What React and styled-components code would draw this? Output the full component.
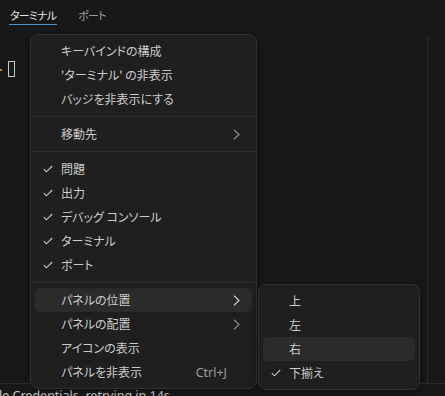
import React from "react";
import styled, { createGlobalStyle } from "styled-components";

const Global = createGlobalStyle`
  html, body { margin: 0; padding: 0; background: #181818; overflow: hidden; }
  * { box-sizing: border-box; }
`;

const jp = `"Noto Sans CJK JP", "Noto Sans", "Liberation Sans", sans-serif`;

const Page = styled.div`
  position: relative;
  width: 445px;
  height: 396px;
  overflow: hidden;
  background: #181818;
  display: flex;
  flex-direction: column;
  font-family: ${jp};
  font-feature-settings: "palt";
`;

const TabBar = styled.div`
  flex: 0 0 35px;
  display: flex;
  align-items: flex-start;
  gap: 20px;
  padding-left: 9px;
`;

const Tab = styled.div`
  padding: 7px 1px 1px;
  line-height: 16px;
  font-size: 11px;
  letter-spacing: -0.8px;
  color: ${(p) => (p.$active ? "#e7e7e7" : "#9d9d9d")};
  border-bottom: 1px solid ${(p) => (p.$active ? "#4f94c8" : "transparent")};
`;

const Body = styled.div`
  flex: 0 0 348px;
  display: flex;
`;

const Terminal = styled.div`
  flex: 1;
  position: relative;
  border-right: 1px solid #2b2b2b;
  margin-right: 17px;
  padding: 26px 0 0 8px;
`;

const Mark = styled.span`
  position: absolute;
  left: 0;
  top: 34px;
  width: 2px;
  height: 2px;
  background: #c98a2a;
`;

const Cursor = styled.div`
  width: 7px;
  height: 16px;
  border: 1px solid #c8c8c8;
`;

const Bottom = styled.div`
  flex: 0 0 auto;
  border-top: 1px solid #2b2b2b;
  padding-top: 4px;
  font-family: "Noto Sans", "Liberation Sans", sans-serif;
  font-size: 12.5px;
  line-height: 16px;
  color: #cccccc;
  white-space: nowrap;
  margin-left: -1px;
`;

const Menu = styled.div`
  position: absolute;
  left: ${(p) => p.$x}px;
  top: ${(p) => p.$y}px;
  width: ${(p) => p.$w}px;
  background: #1f1f1f;
  border: 1px solid #303030;
  border-radius: 8px;
  padding: 4px 0;
  box-shadow: 0 2px 8px rgba(0, 0, 0, 0.36);
  color: #cccccc;
  font-size: 12px;
`;

const Row = styled.div`
  margin: 0 4px;
  height: 24px;
  border-radius: 5px;
  display: grid;
  grid-template-columns: 26px 1fr auto 26px;
  align-items: center;
  background: ${(p) => (p.$hover ? "#2b2b2c" : "transparent")};
  white-space: nowrap;
`;

const CheckCell = styled.div`
  display: flex;
  align-items: center;
  padding-left: 8px;
`;

const Label = styled.span`
  line-height: 24px;
`;

const Key = styled.span`
  color: #9d9d9d;
  font-family: "Noto Sans", "Liberation Sans", sans-serif;
  font-size: 12.5px;
  margin-right: -1px;
`;

const ChevCell = styled.div`
  display: flex;
  align-items: center;
  padding-left: 7px;
  color: ${(p) => (p.$hover ? "#cccccc" : "#8b8b8b")};
`;

const Sep = styled.div`
  height: 1px;
  margin: 5px 0;
  background: #2b2b2b;
`;

const Check = () => (
  <svg width="10" height="8" viewBox="0 0 10 8" fill="none">
    <path d="M0.8 4.2 L3.4 6.8 L9.2 1" stroke="#c5c5c5" strokeWidth="1.1" />
  </svg>
);

const Chevron = () => (
  <svg width="7" height="11" viewBox="0 0 7 11" fill="none">
    <path d="M1 0.8 L6 5.5 L1 10.2" stroke="currentColor" strokeWidth="1.2" />
  </svg>
);

const Item = ({ label, checked, sub, keys, hover }) => (
  <Row $hover={hover}>
    <CheckCell>{checked ? <Check /> : null}</CheckCell>
    <Label>{label}</Label>
    <Key>{keys || ""}</Key>
    <ChevCell $hover={hover}>{sub ? <Chevron /> : null}</ChevCell>
  </Row>
);

export default function App() {
  return (
    <>
      <Global />
      <Page>
        <TabBar>
          <Tab $active>ターミナル</Tab>
          <Tab>ポート</Tab>
        </TabBar>
        <Body>
          <Terminal>
            <Mark />
            <Cursor />
          </Terminal>
        </Body>
        <Bottom>le Credentials, retrying in 14s</Bottom>

        <Menu $x={30} $y={34} $w={227}>
          <Item label="キーバインドの構成" />
          <Item label="'ターミナル' の非表示" />
          <Item label="バッジを非表示にする" />
          <Sep />
          <Item label="移動先" sub />
          <Sep />
          <Item label="問題" checked />
          <Item label="出力" checked />
          <Item label="デバッグ コンソール" checked />
          <Item label="ターミナル" checked />
          <Item label="ポート" checked />
          <Sep />
          <Item label="パネルの位置" sub hover />
          <Item label="パネルの配置" sub />
          <Item label="アイコンの表示" />
          <Item label="パネルを非表示" keys="Ctrl+J" />
        </Menu>

        <Menu $x={258} $y={284} $w={162}>
          <Item label="上" />
          <Item label="左" />
          <Item label="右" hover />
          <Item label="下揃え" checked />
        </Menu>
      </Page>
    </>
  );
}
